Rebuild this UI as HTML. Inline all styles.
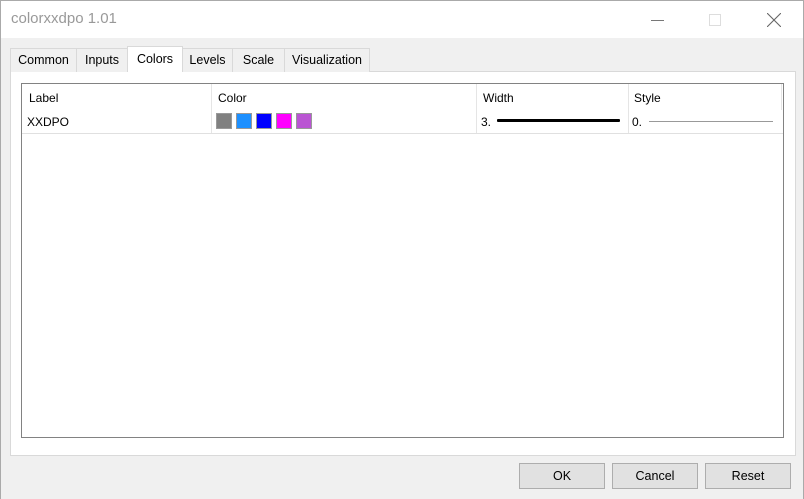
<!DOCTYPE html>
<html><head><style>
*{margin:0;padding:0;box-sizing:border-box}
body{width:804px;height:499px;overflow:hidden;background:#f0f0f0;font-family:"Liberation Sans",sans-serif;font-size:12px;color:#000;position:relative}
.abs{position:absolute}
#title{left:0;top:0;width:804px;height:38px;background:#fff;border:1px solid #aaa;border-bottom:none}
#title span{position:absolute;left:10px;top:9px;font-size:15px;color:#999}
.tab{position:absolute;top:48px;height:24px;background:#f0f0f0;border:1px solid #d9d9d9;border-bottom:none;text-align:center;line-height:23px;font-size:12.5px}
.sel{top:46px;height:26px;background:#fff;line-height:24px;z-index:2}
#panel{left:10px;top:71px;width:786px;height:385px;background:#fff;border:1px solid #d9d9d9}
#list{left:21px;top:83px;width:763px;height:355px;border:1px solid #828282;background:#fff}
.vs{position:absolute;top:0;width:1px;height:49px;background:#e5e5e5}
.sw{position:absolute;top:113px;width:16px;height:16px;border:1px solid #999}
.btn{position:absolute;top:463px;width:86px;height:26px;background:#e1e1e1;border:1px solid #adadad;text-align:center;line-height:24px;font-size:12.5px}
</style></head><body>
<div id="title" class="abs"><span>colorxxdpo 1.01</span>
<div class="abs" style="left:650px;top:19px;width:13px;height:1px;background:#777"></div>
<div class="abs" style="left:708px;top:13px;width:12px;height:12px;border:1px solid #ddd"></div>
<svg class="abs" style="left:766px;top:12px" width="14" height="14"><path d="M0 0L14 14M14 0L0 14" stroke="#666" stroke-width="1.1"/></svg>
</div>
<div id="panel" class="abs"></div>
<div class="tab" style="left:10px;width:67px">Common</div>
<div class="tab" style="left:76px;width:52px">Inputs</div>
<div class="tab sel" style="left:127px;width:56px">Colors</div>
<div class="tab" style="left:182px;width:51px">Levels</div>
<div class="tab" style="left:232px;width:53px">Scale</div>
<div class="tab" style="left:284px;width:86px">Visualization</div>
<div id="list" class="abs">
<div class="vs" style="left:189px"></div>
<div class="vs" style="left:454px"></div>
<div class="vs" style="left:606px"></div>
<div class="vs" style="left:759px;height:26px"></div>
<div class="abs" style="left:0;top:49px;width:761px;height:1px;background:#e0e0e0"></div>
<div class="abs" style="left:7px;top:7px">Label</div>
<div class="abs" style="left:196px;top:7px">Color</div>
<div class="abs" style="left:461px;top:7px">Width</div>
<div class="abs" style="left:612px;top:7px">Style</div>
<div class="abs" style="left:5px;top:31px">XXDPO</div>
<div class="abs" style="left:459px;top:31px;color:#000">3.</div>
<div class="abs" style="left:475px;top:35px;width:123px;height:3px;background:#000;border-radius:1px"></div>
<div class="abs" style="left:610px;top:31px">0.</div>
<div class="abs" style="left:627px;top:37px;width:124px;height:1px;background:#999"></div>
</div>
<div class="sw" style="left:216px;background:#808080"></div>
<div class="sw" style="left:236px;background:#1e90ff"></div>
<div class="sw" style="left:256px;background:#0000ff"></div>
<div class="sw" style="left:276px;background:#ff00ff"></div>
<div class="sw" style="left:296px;background:#ba55d3"></div>
<div class="btn" style="left:519px">OK</div>
<div class="btn" style="left:612px">Cancel</div>
<div class="btn" style="left:705px">Reset</div>
<div class="abs" style="left:0;top:38px;width:1px;height:461px;background:#aaa"></div>
<div class="abs" style="left:803px;top:38px;width:1px;height:461px;background:#aaa"></div>
</body></html>
